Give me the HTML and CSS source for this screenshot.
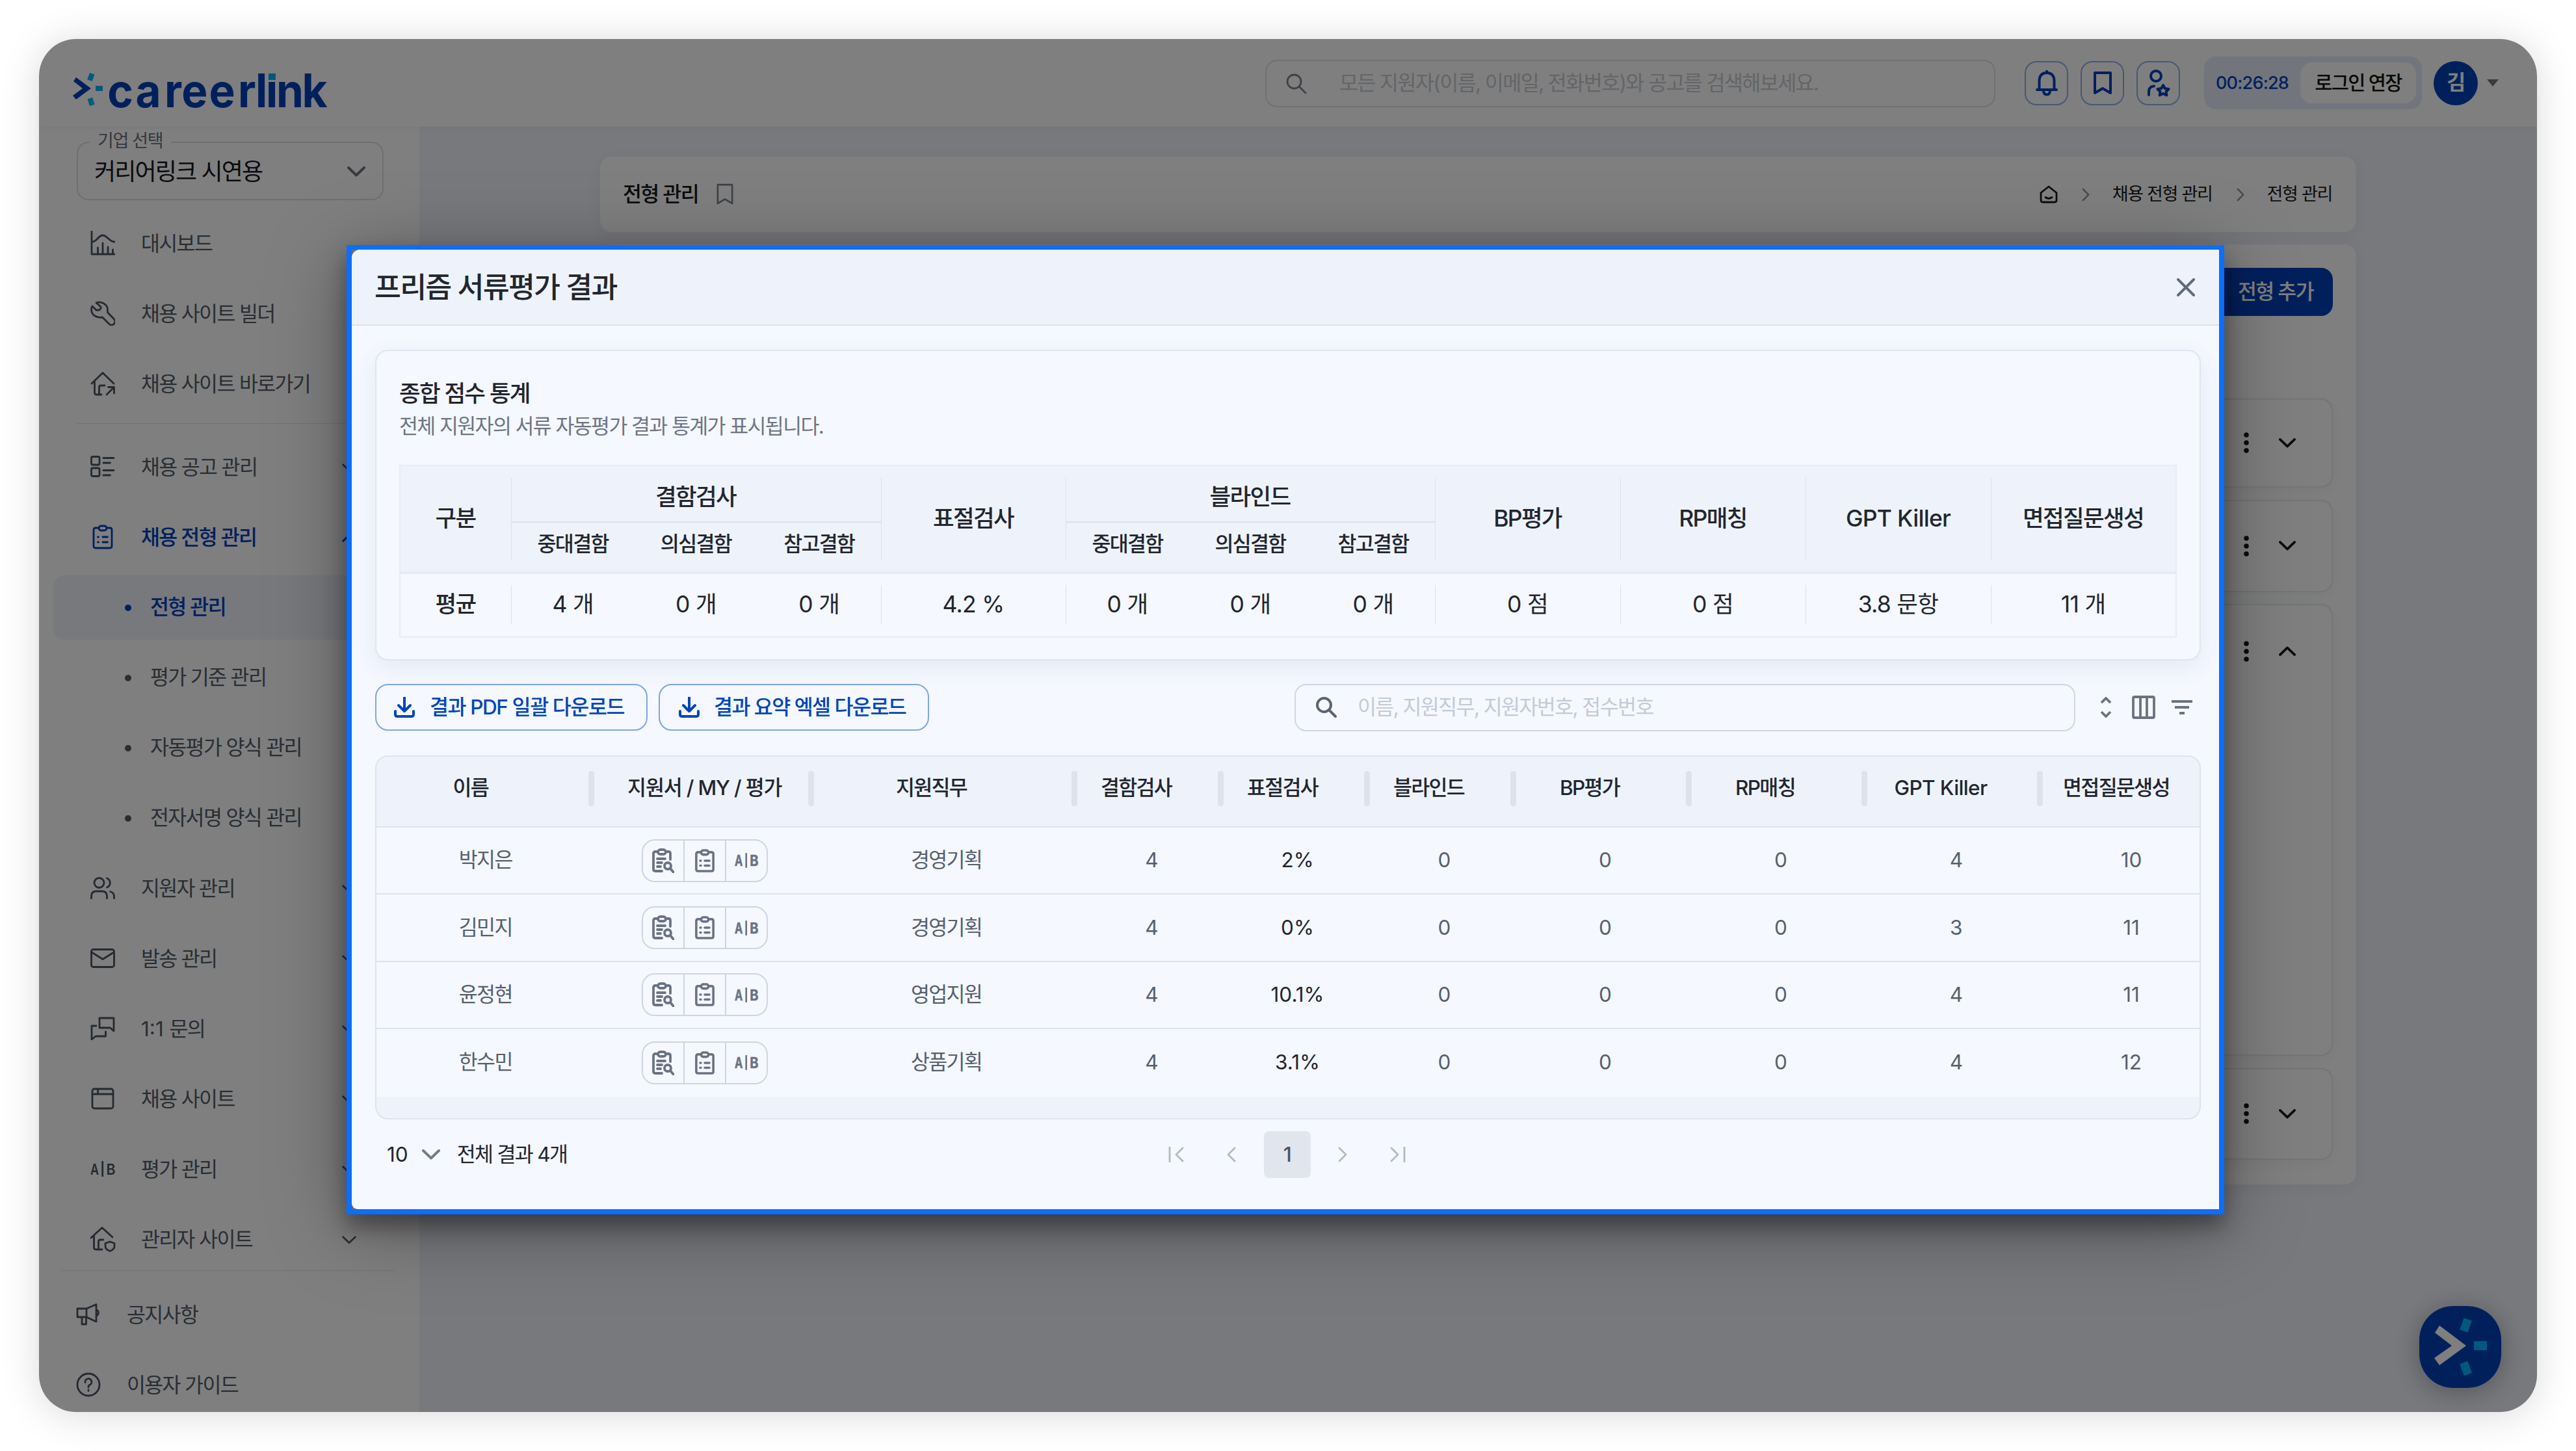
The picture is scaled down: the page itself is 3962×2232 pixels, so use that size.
FILE: index.html
```html
<!DOCTYPE html>
<html lang="ko">
<head>
<meta charset="utf-8">
<title>careerlink</title>
<link rel="stylesheet" href="styles.css">
</head>
<body>
<svg class="defs" aria-hidden="true">
  <symbol id="chev-down" viewBox="0 0 28 16"><path d="M2 2 14 13.5 26 2"/></symbol>
  <symbol id="chev-up" viewBox="0 0 28 16"><path d="M2 14 14 2.5 26 14"/></symbol>
  <symbol id="chev-right" viewBox="0 0 14 24"><path d="M2 2 12 12 2 22"/></symbol>
  <symbol id="chev-left" viewBox="0 0 14 24"><path d="M12 2 2 12 12 22"/></symbol>
  <symbol id="search" viewBox="0 0 32 32"><circle cx="12.5" cy="12.5" r="10.5"/><path d="M20 20 30 30"/></symbol>
  <symbol id="dots" viewBox="0 0 8 32"><g fill="currentColor" stroke="none"><circle cx="4" cy="4" r="3.8"/><circle cx="4" cy="16" r="3.8"/><circle cx="4" cy="28" r="3.8"/></g></symbol>
  <symbol id="dashboard" viewBox="0 0 38 38"><path d="M2 1V36H37M3 17C10 17 12 7 19 7S29 17 37 17M11.500 26V36M19 19V36M27 25V36M34.500 29V36"/></symbol>
  <symbol id="wrench" viewBox="0 0 38 38"><path d="M9 2.800C17 0 26.500 5 26.500 13.500V17.500L36 27.500A4.800 4.800 0 0 1 29 35.500L18.500 25C9.500 26.500 1.500 21.500 1.500 13 1.500 11 2 9.500 3 8L9 14H13.500L16 11.500V9Z"/></symbol>
  <symbol id="house-link" viewBox="0 0 38 38"><path d="M2 19 19 2.500 36 19M6.500 16V33Q6.500 36 9.500 36H17M13.500 35V25Q13.500 22 16.500 22H22M25 36 36 25M27.500 24.500H36.500V34"/></symbol>
  <symbol id="list" viewBox="0 0 38 34"><rect x="1.500" y="1.500" width="12.500" height="12.500" rx="2"/><rect x="1.500" y="19" width="12.500" height="12.500" rx="2"/><path d="M20 3.500H36M20 11H30.500M20 22.500H36M20 30H30.500"/></symbol>
  <symbol id="clip-list" viewBox="0 0 32 38"><path d="M10 5H5Q2 5 2 8V33Q2 36 5 36H27Q30 36 30 33V8Q30 5 27 5H22"/><rect x="10" y="2" width="12" height="7" rx="3.500"/><path d="M8.500 19H9.500M16 19H23.500M8.500 27H9.500M16 27H23.500"/></symbol>
  <symbol id="clip-search" viewBox="0 0 34 38"><path d="M9 5H5Q2 5 2 8V32Q2 35 5 35H15M21 5H25Q28 5 28 8V17"/><rect x="9" y="2" width="12" height="7" rx="3.500"/><path d="M8 16H20M8 22H15M8 28H13"/><circle cx="24" cy="27" r="5"/><path d="M28 31 33 37"/></symbol>
  <symbol id="people" viewBox="0 0 38 34"><circle cx="13.500" cy="9" r="7.500"/><path d="M1.500 33V29Q2 22 9 22H18Q25 22 25.500 29V33M25.500 2A7.500 7.500 0 0 1 25.500 16M30.500 22.500Q36.500 24 36.500 30V33"/></symbol>
  <symbol id="mail" viewBox="0 0 38 30"><rect x="1.500" y="1.500" width="35" height="27" rx="3"/><path d="M3 6.500 19 16.500 35 6.500"/></symbol>
  <symbol id="chat" viewBox="0 0 38 36"><path d="M14 2H36V22L30.500 17H14Z"/><path d="M9 14H2V35L8 30H23.500V23"/></symbol>
  <symbol id="window" viewBox="0 0 36 34"><rect x="2" y="2" width="32" height="30" rx="3"/><path d="M2 10H34M10.500 2V9"/></symbol>
  <symbol id="house-shield" viewBox="0 0 40 40"><path d="M2 18 19 2.500 35 17M6.500 14V33Q6.500 36 9.500 36H19M13.500 36V24Q13.500 21 16.500 21H21M31 24 38 26.500V31Q38 36 31 38.500 24 36 24 31V26.500Z"/></symbol>
  <symbol id="megaphone" viewBox="0 0 38 36"><path d="M2 9H16L31 2.500V29L16 22H2ZM16 9V22M9 22V33H15.500V22M31 10.500A5 5 0 0 1 31 20"/></symbol>
  <symbol id="help" viewBox="0 0 38 38"><circle cx="19" cy="19" r="17"/><path d="M14 15.500A5 5 0 1 1 20.500 19.500Q19 20.200 19 23M19 27V28.500"/></symbol>
  <symbol id="bell" viewBox="0 0 34 40"><path d="M2 30H32M5.500 30V16Q6 4 17 4T28.500 16V30M17 1.500V4M12 31Q12 37.500 17 37.500T22 31"/></symbol>
  <symbol id="bookmark" viewBox="0 0 28 36"><path d="M2 2H26V33L14 26 2 33Z"/></symbol>
  <symbol id="person-star" viewBox="0 0 36 42"><circle cx="14" cy="10" r="8"/><path d="M3 39V34Q3 26 11 25.500M25 24 27.700 29 33.500 30 29.500 34 30.300 39.500 25 37 19.700 39.500 20.500 34 16.500 30 22.300 29Z"/></symbol>
  <symbol id="home" viewBox="0 0 28 28"><path d="M2 11.500 14 2 26 11.500V23Q26 26 23 26H5Q2 26 2 23ZM9 18.500Q14 22 19 18.500"/></symbol>
  <symbol id="download" viewBox="0 0 32 32"><path d="M16 1V21M7 13 16 22 25 13M2 22V27Q2 30 5 30H27Q30 30 30 27V22"/></symbol>
  <symbol id="first" viewBox="0 0 26 24"><path d="M3 1V23M23 2 13 12 23 22"/></symbol>
  <symbol id="last" viewBox="0 0 26 24"><path d="M23 1V23M3 2 13 12 3 22"/></symbol>
</svg>

<div class="frame">
  <header class="topbar">
    <svg class="logo" viewBox="0 0 400 60">
      <path class="navy" d="M5 7 28 24 5 41 0 35 15 24 1 13Z"/>
      <g class="cyan"><rect x="35" y="20" width="11" height="8"/><rect x="24" y="1" width="8" height="11" transform="rotate(20 28 6)"/><rect x="24" y="39" width="8" height="11" transform="rotate(-18 28 44)"/></g>
      <text class="navy" transform="scale(.95 1)" y="52.500" x="56 101.500 148.400 176 220.500 267.400 295.800 312.600 329.500 371">careerlink</text>
      <rect class="white" x="299.500" y="-5" width="14" height="19"/>
      <rect class="cyan" x="301" y="1" width="11" height="10"/>
    </svg>
    <div class="top-search"><svg class="ic"><use href="#search"/></svg><span>모든 지원자(이름, 이메일, 전화번호)와 공고를 검색해보세요.</span></div>
    <div class="top-actions">
      <button><svg class="ic" width="34" height="40"><use href="#bell"/></svg></button>
      <button><svg class="ic" width="28" height="36"><use href="#bookmark"/></svg></button>
      <button><svg class="ic" width="36" height="42"><use href="#person-star"/></svg></button>
    </div>
    <div class="session"><span class="timer">00:26:28</span><span class="extend">로그인 연장</span></div>
    <div class="avatar">김</div>
    <div class="caret"></div>
  </header>

  <div class="body">
    <aside class="sidebar">
      <div class="company"><span class="company-label">기업 선택</span><span>커리어링크 시연용</span><svg class="ic" width="28" height="16"><use href="#chev-down"/></svg></div>
      <nav>
        <a class="item"><i><svg class="ic" width="38" height="38"><use href="#dashboard"/></svg></i>대시보드</a>
        <a class="item"><i><svg class="ic" width="38" height="38"><use href="#wrench"/></svg></i>채용 사이트 빌더</a>
        <a class="item"><i><svg class="ic" width="38" height="38"><use href="#house-link"/></svg></i>채용 사이트 바로가기</a>
        <div class="rule"></div>
        <a class="item"><i><svg class="ic" width="38" height="34"><use href="#list"/></svg></i>채용 공고 관리<svg class="ic fold"><use href="#chev-down"/></svg></a>
        <a class="item on"><i><svg class="ic" width="32" height="38"><use href="#clip-list"/></svg></i>채용 전형 관리<svg class="ic fold"><use href="#chev-up"/></svg></a>
        <a class="sub on">전형 관리</a>
        <a class="sub">평가 기준 관리</a>
        <a class="sub">자동평가 양식 관리</a>
        <a class="sub">전자서명 양식 관리</a>
        <a class="item"><i><svg class="ic" width="38" height="34"><use href="#people"/></svg></i>지원자 관리<svg class="ic fold"><use href="#chev-down"/></svg></a>
        <a class="item"><i><svg class="ic" width="38" height="30"><use href="#mail"/></svg></i>발송 관리<svg class="ic fold"><use href="#chev-down"/></svg></a>
        <a class="item"><i><svg class="ic" width="38" height="36"><use href="#chat"/></svg></i><span class="lat">1:1 </span>문의<svg class="ic fold"><use href="#chev-down"/></svg></a>
        <a class="item"><i><svg class="ic" width="36" height="34"><use href="#window"/></svg></i>채용 사이트<svg class="ic fold"><use href="#chev-down"/></svg></a>
        <a class="item"><i><svg class="ab" viewBox="0 0 38 28"><text x="0" y="22.500" textLength="13" lengthAdjust="spacingAndGlyphs">A</text><text x="24.500" y="22.500" textLength="14" lengthAdjust="spacingAndGlyphs">B</text><path d="M18.700 2V26"/></svg></i>평가 관리<svg class="ic fold"><use href="#chev-down"/></svg></a>
        <a class="item"><i><svg class="ic" width="40" height="40"><use href="#house-shield"/></svg></i>관리자 사이트<svg class="ic fold"><use href="#chev-down"/></svg></a>
      </nav>
      <div class="side-foot">
        <a class="item"><i><svg class="ic" width="38" height="36"><use href="#megaphone"/></svg></i>공지사항</a>
        <a class="item"><i><svg class="ic" width="38" height="38"><use href="#help"/></svg></i>이용자 가이드</a>
      </div>
    </aside>

    <main class="main">
      <section class="card crumbs">
        <h1>전형 관리</h1><svg class="ic mark" width="26" height="34"><use href="#bookmark"/></svg>
        <div class="trail"><svg class="ic" width="28" height="28"><use href="#home"/></svg><svg class="ic sep"><use href="#chev-right"/></svg><span>채용 전형 관리</span><svg class="ic sep"><use href="#chev-right"/></svg><span>전형 관리</span></div>
      </section>
      <section class="card stages">
        <button class="add">전형 추가</button>
        <div class="stage s1"><svg class="ic" width="8" height="32"><use href="#dots"/></svg><svg class="ic" width="26" height="15"><use href="#chev-down"/></svg></div>
        <div class="stage s2"><svg class="ic" width="8" height="32"><use href="#dots"/></svg><svg class="ic" width="26" height="15"><use href="#chev-down"/></svg></div>
        <div class="stage s3"><svg class="ic" width="8" height="32"><use href="#dots"/></svg><svg class="ic" width="26" height="15"><use href="#chev-up"/></svg></div>
        <div class="stage s4"><svg class="ic" width="8" height="32"><use href="#dots"/></svg><svg class="ic" width="26" height="15"><use href="#chev-down"/></svg></div>
      </section>
    </main>
  </div>

  <div class="launcher"><svg viewBox="0 0 126 126"><path class="white" d="M31 30 72 61 31 91 23 80 50 61 24 41Z"/><g class="cyan"><rect x="84" y="54" width="20" height="14"/><rect x="65" y="20" width="13" height="19" transform="rotate(20 71.500 29.500)"/><rect x="65" y="86.500" width="13" height="19" transform="rotate(-20 71.500 96)"/></g></svg></div>

  <div class="scrim"></div>

  <div class="dialog" role="dialog">
   <div class="panel">
    <header class="dialog-head"><h2>프리즘 서류평가 결과</h2><svg class="close" viewBox="0 0 28 28"><path d="M2 2 26 26M26 2 2 26"/></svg></header>
    <div class="dialog-body">
      <section class="summary">
        <h3>종합 점수 통계</h3>
        <p>전체 지원자의 서류 자동평가 결과 통계가 표시됩니다.</p>
        <div class="stat">
          <div class="stat-row stat-head">
            <div class="c">구분</div>
            <div class="c group"><b>결함검사</b><div class="tri"><span>중대결함</span><span>의심결함</span><span>참고결함</span></div></div>
            <div class="c">표절검사</div>
            <div class="c group"><b>블라인드</b><div class="tri"><span>중대결함</span><span>의심결함</span><span>참고결함</span></div></div>
            <div class="c">BP평가</div><div class="c">RP매칭</div><div class="c lat">GPT Killer</div><div class="c">면접질문생성</div>
          </div>
          <div class="stat-row stat-vals">
            <div class="c name">평균</div>
            <div class="c tri"><span>4 개</span><span>0 개</span><span>0 개</span></div>
            <div class="c lat">4.2 %</div>
            <div class="c tri"><span>0 개</span><span>0 개</span><span>0 개</span></div>
            <div class="c">0 점</div><div class="c">0 점</div><div class="c">3.8 문항</div><div class="c">11 개</div>
          </div>
        </div>
      </section>

      <div class="tools">
        <button class="dl pdf"><svg class="ic"><use href="#download"/></svg>결과 PDF 일괄 다운로드</button>
        <button class="dl xls"><svg class="ic"><use href="#download"/></svg>결과 요약 엑셀 다운로드</button>
        <div class="find"><svg class="ic"><use href="#search"/></svg><span>이름, 지원직무, 지원자번호, 접수번호</span></div>
        <svg class="tool t-sort" width="18" height="32" viewBox="0 0 18 32"><path d="M2 9 9 2 16 9M2 23 9 30 16 23"/></svg>
        <svg class="tool t-cols" width="36" height="36" viewBox="0 0 36 36"><rect x="2" y="2" width="32" height="32" rx="2"/><path d="M13 2V34M23 2V34"/></svg>
        <svg class="tool t-filter" width="32" height="24" viewBox="0 0 32 24"><path d="M0 3H32M5 12H27M12 21H20"/></svg>
      </div>

      <div class="grid">
        <div class="tr th"><div>이름</div><div class="wide">지원서 / MY / 평가</div><div>지원직무</div><div>결함검사</div><div>표절검사</div><div>블라인드</div><div>BP평가</div><div>RP매칭</div><div class="lat">GPT Killer</div><div>면접질문생성</div></div>
        <div class="tr"><div>박지은</div><div><span class="trio"><i><svg class="ic" width="34" height="38"><use href="#clip-search"/></svg></i><i><svg class="ic" width="30" height="36"><use href="#clip-list"/></svg></i><i><svg class="ab" viewBox="0 0 38 28"><text x="0" y="22.500" textLength="13" lengthAdjust="spacingAndGlyphs">A</text><text x="24.500" y="22.500" textLength="14" lengthAdjust="spacingAndGlyphs">B</text><path d="M18.700 2V26"/></svg></i></span></div><div>경영기획</div><div>4</div><div class="pct">2%</div><div>0</div><div>0</div><div>0</div><div>4</div><div class="lat">10</div></div>
        <div class="tr"><div>김민지</div><div><span class="trio"><i><svg class="ic" width="34" height="38"><use href="#clip-search"/></svg></i><i><svg class="ic" width="30" height="36"><use href="#clip-list"/></svg></i><i><svg class="ab" viewBox="0 0 38 28"><text x="0" y="22.500" textLength="13" lengthAdjust="spacingAndGlyphs">A</text><text x="24.500" y="22.500" textLength="14" lengthAdjust="spacingAndGlyphs">B</text><path d="M18.700 2V26"/></svg></i></span></div><div>경영기획</div><div>4</div><div class="pct">0%</div><div>0</div><div>0</div><div>0</div><div>3</div><div class="lat">11</div></div>
        <div class="tr"><div>윤정현</div><div><span class="trio"><i><svg class="ic" width="34" height="38"><use href="#clip-search"/></svg></i><i><svg class="ic" width="30" height="36"><use href="#clip-list"/></svg></i><i><svg class="ab" viewBox="0 0 38 28"><text x="0" y="22.500" textLength="13" lengthAdjust="spacingAndGlyphs">A</text><text x="24.500" y="22.500" textLength="14" lengthAdjust="spacingAndGlyphs">B</text><path d="M18.700 2V26"/></svg></i></span></div><div>영업지원</div><div>4</div><div class="pct">10.1%</div><div>0</div><div>0</div><div>0</div><div>4</div><div class="lat">11</div></div>
        <div class="tr"><div>한수민</div><div><span class="trio"><i><svg class="ic" width="34" height="38"><use href="#clip-search"/></svg></i><i><svg class="ic" width="30" height="36"><use href="#clip-list"/></svg></i><i><svg class="ab" viewBox="0 0 38 28"><text x="0" y="22.500" textLength="13" lengthAdjust="spacingAndGlyphs">A</text><text x="24.500" y="22.500" textLength="14" lengthAdjust="spacingAndGlyphs">B</text><path d="M18.700 2V26"/></svg></i></span></div><div>상품기획</div><div>4</div><div class="pct">3.1%</div><div>0</div><div>0</div><div>0</div><div>4</div><div class="lat">12</div></div>
      </div>

      <footer class="pager">
        <div class="size"><span class="lat">10</span><svg class="ic" width="28" height="16"><use href="#chev-down"/></svg><span>전체 결과 4개</span></div>
        <div class="pages">
          <i><svg class="ic" width="26" height="24"><use href="#first"/></svg></i>
          <i><svg class="ic" width="14" height="24"><use href="#chev-left"/></svg></i>
          <b>1</b>
          <i><svg class="ic" width="14" height="24"><use href="#chev-right"/></svg></i>
          <i><svg class="ic" width="26" height="24"><use href="#last"/></svg></i>
        </div>
      </footer>
    </div>
   </div>
  </div>
</div>
</body>
</html>
```
FILE: styles.css
```css
* { box-sizing: border-box; }
body {
  margin: 0;
  padding: 60px;
  height: 2232px;
  background: #fff;
  font-family: Inter, "Noto Sans CJK KR", sans-serif;
  font-size: 31.5px;
  line-height: 1.3;
  letter-spacing: -0.053em;
  color: #22262e;
  overflow: hidden;
}
h1, h2, h3, p { margin: 0; font-weight: 500; }
button { font: inherit; letter-spacing: inherit; padding: 0; border: 0; }
i { font-style: normal; }
.defs { position: absolute; width: 0; height: 0; }
.ic { fill: none; stroke: currentColor; stroke-width: 2.8; stroke-linecap: round; stroke-linejoin: round; flex: none; }
.lat { letter-spacing: 0; white-space: pre; }
.navy { fill: #0040b8; }
.cyan { fill: #00b2f8; }
.white { fill: #fff; }
.ab { width: 38px; height: 28px; flex: none; overflow: visible; }
.ab text { font-family: Inter, sans-serif; font-size: 23px; font-weight: 600; letter-spacing: 0; fill: currentColor; }
.ab path { stroke: currentColor; stroke-width: 2.8; fill: none; }

.frame {
  position: relative;
  height: 2112px;
  border-radius: 57px;
  overflow: hidden;
  background: #fff;
  display: flex;
  flex-direction: column;
}
body::before {
  content: "";
  position: absolute;
  left: 60px; top: 60px;
  width: 3842px; height: 2112px;
  border-radius: 57px;
  box-shadow: 0 4px 60px rgba(0, 0, 0, .15);
}

/* top bar */
.topbar {
  height: 135px;
  flex: none;
  display: flex;
  align-items: center;
  padding: 0 59px 0 52px;
  background: #fff;
  box-shadow: 0 2px 12px rgba(40, 60, 120, .06);
  position: relative;
}
.logo { width: 400px; height: 60px; margin-top: 28px; overflow: visible; }
.logo text { font-family: Inter, sans-serif; font-weight: 700; font-size: 71px; letter-spacing: 0; }
.top-search {
  margin-left: auto;
  margin-top: 2px;
  width: 1123px; height: 73px;
  border: 2px solid #e0e3e8;
  border-radius: 18px;
  display: flex; align-items: center;
  padding-left: 30px; gap: 50px;
  color: #c6cad2;
  letter-spacing: -.05em;
}
.top-search .ic { width: 32px; height: 32px; color: #7c8490; }
.top-actions { display: flex; gap: 19px; margin-left: 45px; color: #0040b8; }
.top-actions button {
  width: 67px; height: 68px;
  border: 2px solid #8fb0ea;
  border-radius: 18px;
  background: none; color: inherit;
  display: flex; align-items: center; justify-content: center;
}
.top-actions .ic { stroke-width: 4; }
.session {
  margin-left: 37px;
  width: 335px; height: 81px;
  border-radius: 18px;
  background: #e6ebfb;
  display: flex; align-items: center; justify-content: space-between;
  padding: 0 9px 0 18px;
}
.timer { color: #0040b8; font-size: 27px; letter-spacing: -.03em; font-weight: 500; }
.extend {
  width: 178px; height: 63px;
  border-radius: 18px;
  background: #fff;
  display: flex; align-items: center; justify-content: center;
  font-size: 29.500px; font-weight: 500; color: #111;
}
.avatar {
  margin-left: 18px;
  width: 68px; height: 68px;
  border-radius: 50%;
  background: #0040b8; color: #fff;
  display: flex; align-items: center; justify-content: center;
  font-weight: 600;
}
.caret { margin-left: 14px; border: 9px solid transparent; border-top: 11px solid #777; border-bottom: 0; }

/* side bar */
.body { flex: 1; min-height: 0; display: flex; }
.sidebar { width: 585px; background: #fff; padding-top: 23px; flex: none; color: #525c69; }
.company {
  position: relative;
  margin: 0 55px 12px 58px;
  height: 90px;
  border: 2px solid #dcdfe5;
  border-radius: 18px;
  display: flex; align-items: center; justify-content: space-between;
  padding: 2px 26px 0 25px;
  font-size: 36px; letter-spacing: -.052em; color: #15181d;
}
.company .ic { stroke-width: 4; color: #6e747d; }
.company-label {
  position: absolute; left: 18px; top: -21px;
  padding: 0 12px;
  background: #fff; color: #6b7280;
  font-size: 27px; letter-spacing: -.05em;
}
.item { height: 108px; display: flex; align-items: center; padding: 2px 97px 0 78px; }
.item i { width: 40px; margin: -2px 39px 0 0; display: flex; justify-content: center; }
.item i > svg { color: #4a5462; }
.item.on, .item.on i > svg { color: #0040b8; font-weight: 500; }
.fold { width: 22px; height: 13px; margin-left: auto; stroke-width: 3.400; }
.rule { height: 1px; margin: 7px 36px 12px 58px; background: #e3e6ea; }
.sub {
  height: 99px;
  margin: 0 23px 9px 22px;
  border-radius: 18px;
  display: flex; align-items: center; gap: 29px;
  padding: 1px 0 0 110px;
}
.sub:has(+ .item) { margin-bottom: 4.500px; }
.item + .sub { margin-top: 4.500px; }
.sub::before { content: ""; width: 10px; height: 10px; border-radius: 50%; background: currentColor; }
.sub.on { background: #f0f2fb; color: #0040b8; font-weight: 500; }
.side-foot { margin: -6px 36px 0 35px; border-top: 1px solid #e3e6ea; padding-top: 13px; }
.side-foot .item { padding-left: 21px; }

/* page behind the dialog */
.main { flex: 1; background: #f1f3fa; padding: 46px 278px 0 278px; }
.card { background: #fff; border-radius: 18px; box-shadow: 0 4px 26px rgba(40, 60, 120, .07); }
.crumbs { height: 116px; display: flex; align-items: center; padding: 0 37px 0 35px; color: #15181d; }
.crumbs h1 { font-size: 31.500px; padding-top: 1px; }
.mark { margin-left: 28px; color: #7a828e; }
.trail { margin-left: auto; display: flex; align-items: center; font-size: 27px; letter-spacing: -.048em; }
.trail .sep { width: 12px; height: 21px; color: #8a919c; margin: 0 35px 0 37px; }
.stages { margin-top: 18.500px; height: 1446px; padding: 36.500px 36px; display: flex; flex-direction: column; }
.add {
  align-self: flex-end;
  width: 230px; height: 74px;
  padding-left: 54px;
  border-radius: 18px;
  background: #0040b8; color: #fff;
  font-weight: 500;
}
.stage {
  border: 2px solid #e6e8ee;
  border-radius: 18px;
  display: flex; justify-content: flex-end; align-items: center;
  gap: 46px; padding: 0 55px 1px 0;
  color: #15181d;
  box-shadow: 0 6px 20px rgba(40, 60, 120, .05);
}
.stage .ic { stroke-width: 4; }
.s1 { height: 137px; margin-top: 127px; }
.s2 { height: 142px; margin-top: 19px; }
.s3 { height: 695px; margin-top: 18px; align-items: flex-start; padding-top: 55px; }
.s3 .ic + .ic { margin-top: 8px; }
.s4 { height: 141px; margin-top: 19px; }

.launcher {
  position: absolute; right: 55px; bottom: 37px;
  width: 126px; height: 126px;
  border-radius: 52px;
  background: #0040b8;
  box-shadow: 0 6px 40px rgba(0, 0, 0, .3);
}
.launcher svg { display: block; }
.scrim { position: absolute; inset: 0; background: rgba(0, 0, 0, .5); }

/* dialog */
.dialog {
  position: absolute; left: 473px; top: 317px;
  width: 2888px; height: 1491px;
  border: 8px solid #0a6eff;
  border-top-width: 7px;
  background: #6a6c70;
  box-shadow: 0 18px 30px rgba(0, 0, 0, .35), 0 20px 110px rgba(0, 0, 0, .35);
}
.panel { height: 100%; border-radius: 13px 0 0 9px; overflow: hidden; background: #f5f8ff; }
.dialog-head {
  height: 117px;
  background: #eef3fb;
  border-bottom: 2px solid #dde2ec;
  display: flex; align-items: center; justify-content: space-between;
  padding: 0 37px 0 35px;
}
.dialog-head h2 { font-size: 44.500px; letter-spacing: -.04em; padding-top: 3px; }
.close { width: 28px; height: 28px; fill: none; stroke: #626b7a; stroke-width: 4; stroke-linecap: round; }
.dialog-body { padding: 37px 28px 0 36px; }

.summary {
  height: 478px;
  border: 2px solid #e0e5ef;
  border-radius: 20px;
  padding: 42px 35px 0 35px;
  box-shadow: 0 10px 36px rgba(60, 80, 130, .09);
}
.summary h3 { font-size: 35.500px; line-height: 48px; letter-spacing: -.05em; }
.summary p { line-height: 42px; margin-top: 5px; color: #6d7686; font-weight: 400; letter-spacing: -.052em; }
.stat { margin-top: 38px; border: 2px solid #e7ebf4; }
.stat-row { display: grid; grid-template-columns: 170px 569px 284px 568px 285px 285px 285px 1fr; align-items: stretch; font-size: 35.500px; }
.stat-head { height: 166px; padding: 18px 0; background: #eef3fb; border-bottom: 4px solid #e7ebf4; font-weight: 500; }
.stat-vals { height: 96px; padding: 17px 0 19px; }
.c { display: flex; align-items: center; justify-content: center; }
.c + .c { border-left: 1.500px solid #dbe0eb; }
.stat .c, .tri span { padding-right: 1px; }
.stat .c.group, .stat .c.tri { padding-right: 0; }
.c.group { flex-direction: column; align-items: stretch; }
.group b { height: 69px; line-height: 59px; padding-right: 2px; text-align: center; font-weight: 500; border-bottom: 2px solid #dbe0eb; }
.tri { display: grid; grid-template-columns: repeat(3, 1fr); text-align: center; }
.group .tri { flex: 1; align-content: center; font-size: 31.500px; padding-top: 9px; }
.name { font-weight: 500; }
.stat-vals .c:not(.name) { letter-spacing: -.02em; }
.stat-head .lat { letter-spacing: -.02em; }

.tools { margin-top: 36px; height: 72px; display: flex; align-items: center; }
.dl {
  height: 72px;
  margin-right: 17px;
  border: 2px solid #7fa5e6;
  border-radius: 20px;
  background: none;
  color: #0045b8; font-weight: 500;
  display: flex; align-items: center; gap: 23px;
  padding-left: 27px;
  white-space: nowrap;
}
.pdf { width: 419px; letter-spacing: -.044em; }
.xls { width: 415.500px; letter-spacing: -.048em; padding-left: 29px; gap: 22px; }
.dl .ic { width: 32px; height: 32px; stroke-width: 4; }
.find {
  margin-left: auto;
  width: 1201px; height: 73px;
  border: 2px solid #cfd6e2;
  border-radius: 18px;
  display: flex; align-items: center;
  padding-left: 31px; gap: 32px;
  color: #c2cad7;
  letter-spacing: -.051em;
}
.find .ic { width: 32px; height: 32px; stroke-width: 4; color: #5b6474; }
.tool { fill: none; stroke: #6b7280; stroke-width: 3.800; flex: none; }
.t-sort { margin-left: 38px; }
.t-cols { margin-left: 31px; }
.t-filter { margin: 0 13px 0 25px; }

.grid {
  margin-top: 38px;
  height: 560px;
  border: 2px solid #dde3ee;
  border-radius: 20px;
  overflow: hidden;
  background: #eef3fb;
}
.tr {
  width: 2835px;
  height: 103.400px;
  display: grid;
  grid-template-columns: 335.500px 338.500px 405px repeat(3, 225px) repeat(4, 270px);
  background: #f5f8ff;
  color: #56606f;
}
.tr:not(:last-child) { border-bottom: 2px solid #dde3ee; }
.tr > div { display: flex; align-items: center; justify-content: center; white-space: nowrap; }
.tr .pct { color: #22262e; letter-spacing: 0; }
.th { height: 109px; background: #eef3fb; color: #22262e; font-weight: 500; }
.th > div { position: relative; padding: 0 46px 11px 0; }
.th > .lat { letter-spacing: -.02em; }
.th > .wide { padding-right: 0; letter-spacing: -.037em; }
.th > div:not(:last-child)::after {
  content: ""; position: absolute; right: 1px; top: 22px;
  width: 9px; height: 54px; border-radius: 4px; background: #dde2ed;
}
.trio { display: flex; height: 66px; width: 194px; border: 2px solid #cdd5e2; border-radius: 20px; color: #6a7385; }
.trio i { flex: 1; display: flex; align-items: center; justify-content: center; }
.trio i + i { border-left: 2px solid #cdd5e2; }
.trio .ic { stroke-width: 3.800; }
.trio .ab { width: 36px; height: 27px; }
.trio .ab text { font-size: 24px; font-weight: 700; stroke: currentColor; stroke-width: .6px; }

.pager { position: relative; margin-top: 18px; height: 72px; display: flex; align-items: center; justify-content: center; }
.size { position: absolute; left: 18px; display: flex; align-items: center; }
.size .ic { margin: 0 26px 0 21px; stroke-width: 4; color: #747b88; }
.pages { display: flex; align-items: center; color: #b1b9c6; margin-right: 3px; gap: 14px; }
.pages i { width: 71px; display: flex; justify-content: center; }
.pages b { width: 72px; height: 72px; border-radius: 8px; background: #e1e5ee; color: #4b5565; font-weight: 500; display: flex; align-items: center; justify-content: center; }
```
